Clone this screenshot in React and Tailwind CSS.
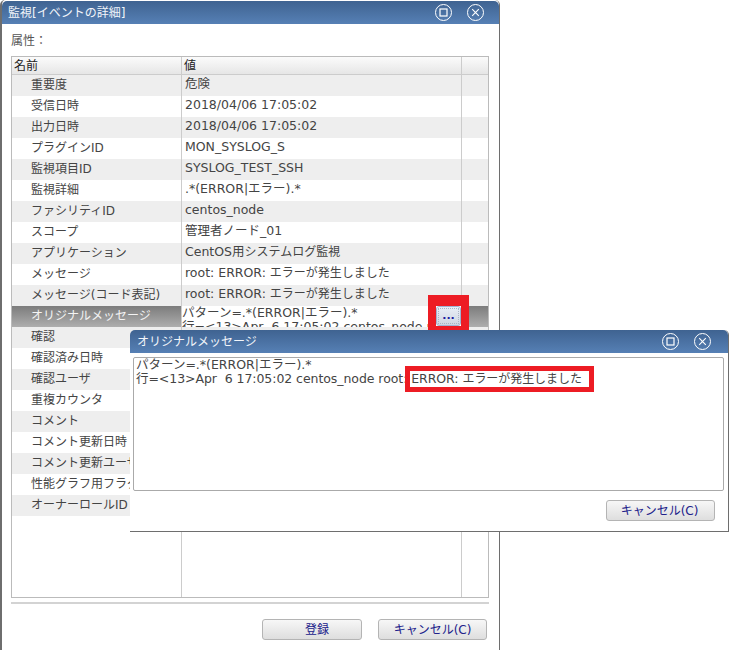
const font = { fontFamily: '"DejaVu Sans", "Noto Sans CJK JP", sans-serif' }

const errorText = <>root: ERROR: <span className="text-[12px]">エラーが発生しました</span></>

const rows = [
  ["重要度", "危険"],
  ["受信日時", "2018/04/06 17:05:02"],
  ["出力日時", "2018/04/06 17:05:02"],
  ["プラグインID", "MON_SYSLOG_S"],
  ["監視項目ID", "SYSLOG_TEST_SSH"],
  ["監視詳細", ".*(ERROR|エラー).*"],
  ["ファシリティID", "centos_node"],
  ["スコープ", "管理者ノード_01"],
  ["アプリケーション", <>CentOS用<span className="text-[12px]">システムログ監視</span></>],
  ["メッセージ", errorText],
  ["メッセージ(コード表記)", errorText],
  ["オリジナルメッセージ", ""],
  ["確認", ""],
  ["確認済み日時", ""],
  ["確認ユーザ", ""],
  ["重複カウンタ", ""],
  ["コメント", ""],
  ["コメント更新日時", ""],
  ["コメント更新ユーザ", ""],
  ["性能グラフ用フラグ", ""],
  ["オーナーロールID", ""],
]

function TitleBar({ title, className }) {
  return (
    <div className={`flex items-center justify-between bg-gradient-to-b from-[#3f6391] to-[#5680b5] rounded-t-[5px] ${className}`}>
      <span className="text-[12px] text-[#f2f5fa] leading-none">{title}</span>
      <div className="flex items-center gap-[15px]">
        <svg width="17" height="17" viewBox="0 0 17 17" fill="none" stroke="#fff">
          <circle cx="8.5" cy="8.5" r="8" />
          <rect x="5" y="5" width="7" height="7" strokeWidth="1.2" />
        </svg>
        <svg width="17" height="17" viewBox="0 0 17 17" fill="none" stroke="#fff">
          <circle cx="8.5" cy="8.5" r="8" />
          <path d="M5.2 5.2 L11.8 11.8 M11.8 5.2 L5.2 11.8" strokeWidth="1.1" />
        </svg>
      </div>
    </div>
  )
}

function PlainButton({ label, className }) {
  return (
    <button className={`h-[21px] border border-[#b4b4b4] rounded-[3px] bg-gradient-to-b from-[#f7f7f7] to-[#dedede] text-[12px] leading-none text-[#20208a] ${className}`}>
      {label}
    </button>
  )
}

function Row({ name, value, index }) {
  const selected = index === 11
  const gray = index % 2 === 0
  if (selected) {
    return (
      <div className="flex h-[21px] shrink-0">
        <div className="w-[170px] pl-[19px] pb-[2px] flex items-center text-[12px] text-[#f4f4f4] bg-gradient-to-b from-[#7c7c7c] to-[#aeaeae] border-r border-[#cccccc]">
          {name}
        </div>
        <div className="w-[280px] overflow-hidden bg-white text-[12.5px] leading-[14px] text-[#444444] whitespace-pre border-r border-[#cccccc]">
          <div>パターン=.*(ERROR|エラー).*</div>
          <div>行=&lt;13&gt;Apr  6 17:05:02 centos_node r</div>
        </div>
        <div className="flex-1 bg-gradient-to-b from-[#7c7c7c] to-[#aeaeae]" />
      </div>
    )
  }
  return (
    <div className={`flex h-[21px] shrink-0 ${gray ? "bg-[#eeeeee]" : "bg-white"}`}>
      <div className="w-[170px] pl-[19px] pb-[2px] flex items-center text-[12px] text-[#444444] whitespace-nowrap overflow-hidden border-r border-[#cccccc]">
        {name}
      </div>
      <div className="w-[280px] pl-[3px] pb-[2px] flex items-center text-[12.5px] text-[#444444] whitespace-pre border-r border-[#cccccc]">
        <span>{value}</span>
      </div>
      <div className="flex-1" />
    </div>
  )
}

export default function App() {
  return (
    <div className="relative w-[732px] h-[650px] overflow-hidden bg-white" style={font}>
      {/* main window */}
      <div className="w-[500px] h-[650px] flex flex-col border-l-2 border-r border-[#6e6e6e] rounded-t-[5px] pt-px">
        <TitleBar title="監視[イベントの詳細]" className="h-[23px] pl-[6px] pr-[15px] shrink-0" />

        <div className="pl-[9px] pt-[10px] h-[32px] shrink-0 text-[12px] leading-[14px] text-[#555555]">属性：</div>

        <div className="ml-[9px] w-[478px] h-[542px] shrink-0 flex flex-col border border-[#bbbbbb]">
          <div className="flex h-[18px] shrink-0 border-b border-[#cccccc] bg-gradient-to-b from-[#fbfbfb] to-[#e6e6e6] text-[12px] text-[#222222]">
            <div className="w-[170px] pl-[2px] flex items-center border-r border-[#cccccc]">名前</div>
            <div className="w-[280px] pl-[2px] flex items-center border-r border-[#cccccc]">値</div>
            <div className="flex-1" />
          </div>
          {rows.map((r, i) => (
            <Row key={r[0]} name={r[0]} value={r[1]} index={i} />
          ))}
          <div className="flex flex-1">
            <div className="w-[170px] border-r border-[#cccccc]" />
            <div className="w-[280px] border-r border-[#cccccc]" />
          </div>
        </div>

        <div className="ml-[9px] w-[478px] h-[2px] mt-[4px] shrink-0 bg-[#d3d3d3]" />

        <div className="flex justify-end gap-[16px] pr-[12px] mt-[15px]">
          <PlainButton label="登録" className="w-[100px] pl-[10px]" />
          <PlainButton label="キャンセル(C)" className="w-[109px]" />
        </div>
      </div>

      {/* "..." button with its red frame */}
      <div className="absolute left-[428px] top-[295px] w-[41px] h-[38px] border-x-[8px] border-t-[11px] border-b-[7px] border-[#ed1c24]">
        <div className="w-full h-full border border-[#9fb3d1] rounded-[3px] bg-gradient-to-b from-[#e9eef6] to-[#cfd6e2] p-px">
          <div className="w-full h-full border border-dotted border-[#aab4c4] flex items-end justify-center text-[11px] leading-[14px] font-bold text-[#1c1ca0]">...</div>
        </div>
      </div>

      {/* sub dialog */}
      <div className="absolute left-[130px] top-[330px] w-[599px] h-[202px] flex flex-col bg-white border-r border-b border-[#6e6e6e] rounded-t-[5px]">
        <TitleBar title="オリジナルメッセージ" className="h-[23px] pl-[7px] pr-[17px] shrink-0" />
        <div className="relative ml-[3px] mt-[4px] w-[591px] h-[134px] border border-[#aaaaaa] rounded-[2px] pl-[2px] text-[12.5px] leading-[14px] text-[#444444] whitespace-pre">
          <div>パターン=.*(ERROR|エラー).*</div>
          <div className="tracking-[-0.06px]">行=&lt;13&gt;Apr  6 17:05:02 centos_node root: ERROR: <span className="text-[12px]">エラーが発生しました</span></div>
          <div className="absolute left-[271px] top-[8px] w-[189px] h-[26px] border-[5px] border-[#ed1c24]" />
        </div>
        <div className="flex justify-end pr-[13px] mt-[9px]">
          <PlainButton label="キャンセル(C)" className="w-[109px] pr-[2px]" />
        </div>
      </div>
    </div>
  )
}
